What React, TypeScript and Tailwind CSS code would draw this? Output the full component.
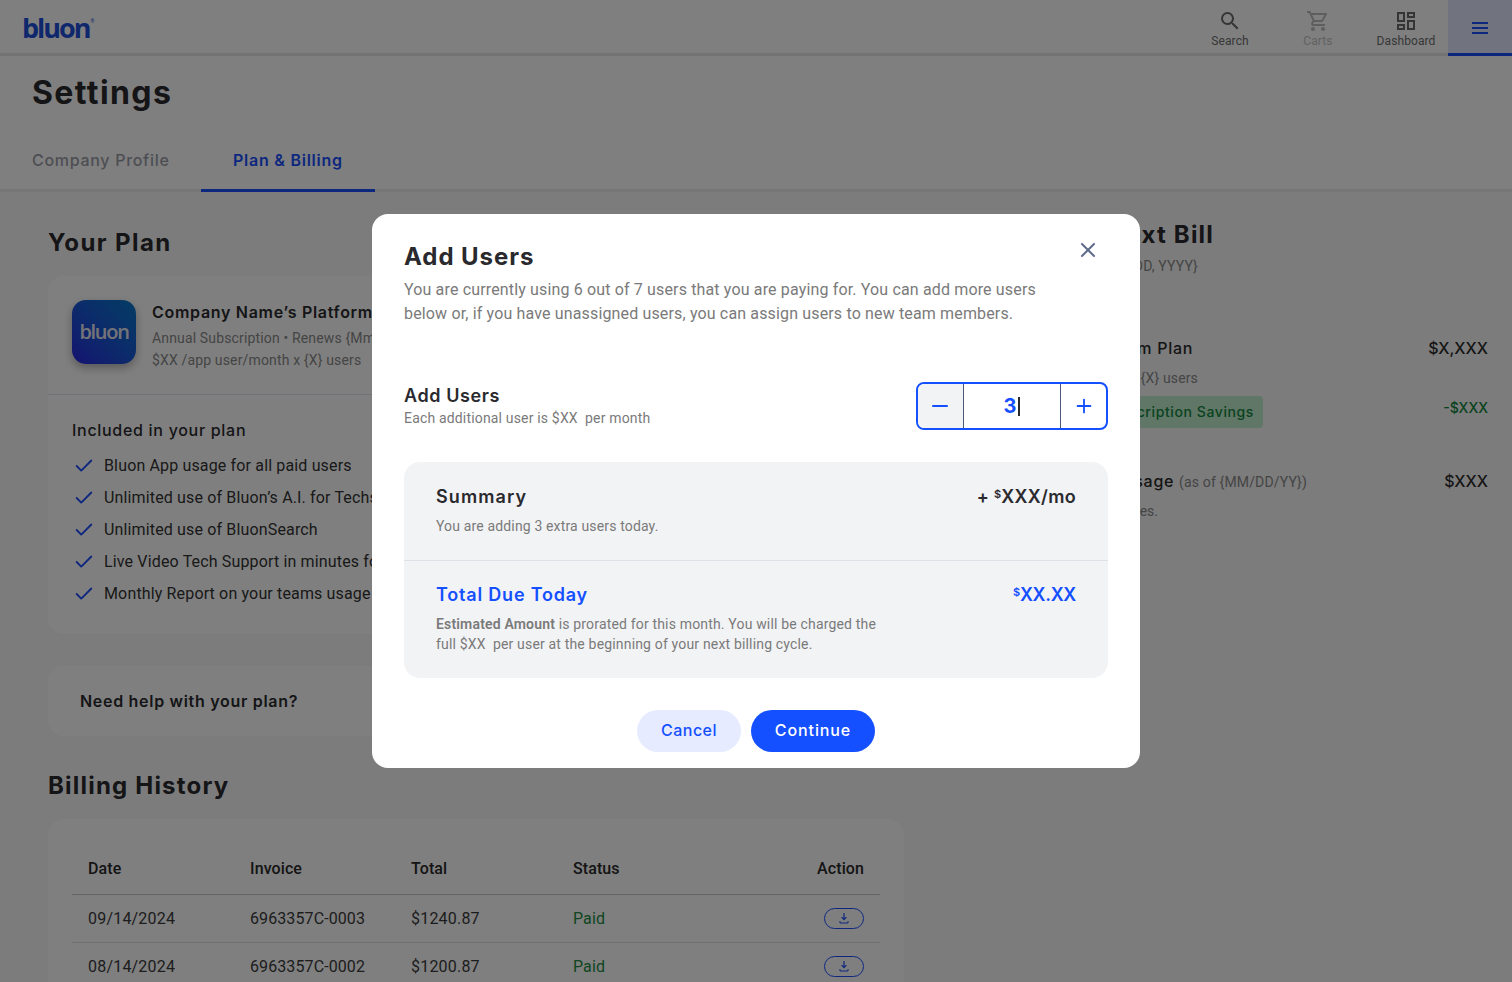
import React from 'react';
import { Check, Minus, Plus, X } from 'lucide-react';
import { MdOutlineDashboard, MdOutlineShoppingCart, MdSearch } from 'react-icons/md';

const heading = "font-['Inter','Liberation_Sans',sans-serif]";

const planItems = [
    'Bluon App usage for all paid users',
    'Unlimited use of Bluon’s A.I. for Techs and Managers',
    'Unlimited use of BluonSearch',
    'Live Video Tech Support in minutes for all users',
    'Monthly Report on your teams usage',
];

const invoices = [
    { date: '09/14/2024', invoice: '6963357C-0003', total: '$1240.87' },
    { date: '08/14/2024', invoice: '6963357C-0002', total: '$1200.87' },
];

const NavItem: React.FC<{ label: string; muted?: boolean; children: React.ReactNode }> = ({ label, muted, children }) => (
    <div className={`w-[88px] flex flex-col items-center pt-[9px] ${muted ? 'text-[#bdbdbd]' : 'text-[#6b6b6b]'}`}>
        {children}
        <span className={`text-[12px] leading-[14px] mt-[1px] tracking-[0.1px] ${muted ? 'text-[#c4c4c4]' : 'text-[#6f6f6f]'}`}>{label}</span>
    </div>
);

const DownloadButton = () => (
    <span className="w-[40px] h-[21px] rounded-full border border-[#1a4fff] flex items-center justify-center">
        <svg width="12" height="13" viewBox="0 0 12 13" fill="none" stroke="#1a4fff" strokeWidth="1.2">
            <path d="M6 1v6.5M3.6 5.2L6 7.6 8.4 5.2" />
            <path d="M2 9v2h8V9" strokeWidth="1" />
        </svg>
    </span>
);

const App: React.FC = () => {
    return (
        <div className="relative h-[982px] overflow-hidden bg-[#f8f8f8] font-['Roboto','Liberation_Sans',sans-serif] text-[#2a2a2a]">
            {/* top bar */}
            <header className="h-[56px] bg-white border-b-[3px] border-[#e6e6e6] flex items-stretch justify-between">
                <div className="pl-[22px] pt-[9px] flex items-start">
                    <span className="font-['Open_Sans','Liberation_Sans',sans-serif] font-bold text-[27px] leading-[38px] tracking-[-2px] text-[#1f4fd8]">bluon</span>
                    <span className="ml-[1px] mt-[9px] text-[5px] leading-[6px] text-[#1f4fd8]">®</span>
                </div>
                <div className="flex items-stretch">
                    <NavItem label="Search"><MdSearch size={24} /></NavItem>
                    <NavItem label="Carts" muted><MdOutlineShoppingCart size={24} /></NavItem>
                    <NavItem label="Dashboard"><MdOutlineDashboard size={24} /></NavItem>
                    <div className="relative -ml-[2px] w-[64px] h-[56px] pt-[2px] bg-[#e2e8ff] border-b-[3px] border-[#1a4fff] flex items-center justify-center">
                        <svg width="16" height="12" viewBox="0 0 16 12" stroke="#1a4fff" strokeWidth="2"><path d="M0 1h16M0 6h16M0 11h16" /></svg>
                    </div>
                </div>
            </header>

            {/* title and tabs */}
            <div className="bg-white border-b-[3px] border-[#ececec] h-[136px]">
                <h1 className={`${heading} pl-[32px] pt-[15px] text-[32px] leading-[44px] font-bold tracking-[1.4px] text-[#2a2a2e]`}>Settings</h1>
                <div className="flex mt-[31px] h-[46px]">
                    <div className={`${heading} pl-[32px] w-[201px] text-[16px] leading-[28px] font-medium text-[#9a9ca8] tracking-[0.7px]`}>Company Profile</div>
                    <div className={`${heading} w-[174px] h-[46px] border-b-[3px] border-[#1a4fff] pl-[32px] text-[16px] leading-[28px] font-semibold text-[#1a4fff] tracking-[0.75px]`}>Plan &amp; Billing</div>
                </div>
            </div>

            {/* page body */}
            <div className="flex">
                <main className="w-[856px] ml-[48px]">
                    <h2 className={`${heading} mt-[35px] text-[24px] leading-[32px] font-bold tracking-[1.4px] text-[#2a2a2e]`}>Your Plan</h2>
                    <section className="mt-[17px] h-[358px] rounded-[16px] bg-white">
                        <div className="h-[119px] border-b border-[#e2e4f0] px-[24px] pt-[24px] flex">
                            <div className="w-[64px] h-[64px] rounded-[14px] bg-gradient-to-tr from-[#2a1fe0] to-[#0a78c8] shadow-[0_4px_10px_rgba(0,0,0,0.3)] flex items-center justify-center">
                                <span className="font-['Open_Sans','Liberation_Sans',sans-serif] font-semibold text-[20px] tracking-[-1.3px] text-[#e8e8f0]">bluon</span>
                            </div>
                            <div className="ml-[16px]">
                                <div className={`${heading} text-[16px] leading-[24px] font-semibold tracking-[0.7px] text-[#2a2a2e]`}>Company Name’s Platform Plan</div>
                                <div className="mt-[3px] text-[14px] leading-[22px] tracking-[0.15px] text-[#8a8a8a]">Annual Subscription • Renews {'{Mmm DD, YYYY}'}</div>
                                <div className="text-[14px] leading-[22px] tracking-[0.15px] text-[#8a8a8a]">$XX /app user/month x {'{X}'} users</div>
                            </div>
                        </div>
                        <div className="px-[24px] pt-[23px]">
                            <div className={`${heading} text-[16px] leading-[24px] font-medium tracking-[0.7px] text-[#2a2a2e]`}>Included in your plan</div>
                            <ul className="mt-[8px]">
                                {planItems.map(item => (
                                    <li key={item} className="h-[32px] flex items-center text-[16px] tracking-[0.15px] text-[#333]">
                                        <Check size={22} strokeWidth={2} className="ml-[1px] text-[#1a4fff]" />
                                        <span className="ml-[9px]">{item}</span>
                                    </li>
                                ))}
                            </ul>
                        </div>
                    </section>
                    <section className="mt-[32px] h-[70px] rounded-[16px] bg-white px-[32px] flex items-center">
                        <span className={`${heading} text-[16px] font-semibold tracking-[0.7px] text-[#2a2a2e]`}>Need help with your plan?</span>
                    </section>
                    <h2 className={`${heading} mt-[34px] text-[24px] leading-[32px] font-bold tracking-[1.2px] text-[#2a2a2e]`}>Billing History</h2>
                    <section className="mt-[17px] rounded-[16px] bg-white px-[24px] pt-[25px] pb-[24px]">
                        <table className="w-full text-[16px] tracking-[0.1px] text-left">
                            <thead>
                                <tr className="h-[50px] border-b border-[#c9c9d2]">
                                    <th className="w-[162px] pl-[16px] font-medium">Date</th>
                                    <th className="w-[161px] pl-[16px] font-medium">Invoice</th>
                                    <th className="w-[162px] pl-[16px] font-medium">Total</th>
                                    <th className="pl-[16px] font-medium">Status</th>
                                    <th className="pr-[16px] font-medium text-right">Action</th>
                                </tr>
                            </thead>
                            <tbody>
                                {invoices.map(row => (
                                    <tr key={row.invoice} className="h-[48px] border-b border-[#e0e0e0] text-[#3a3a3a]">
                                        <td className="pl-[16px] pt-[2px] tracking-[0.2px]">{row.date}</td>
                                        <td className="pl-[16px] pt-[2px]">{row.invoice}</td>
                                        <td className="pl-[16px] pt-[2px] tracking-[0.2px]">{row.total}</td>
                                        <td className="pl-[16px] pt-[2px] text-[#1c8c42]">Paid</td>
                                        <td className="pr-[16px]"><div className="flex justify-end"><DownloadButton /></div></td>
                                    </tr>
                                ))}
                            </tbody>
                        </table>
                    </section>
                </main>

                {/* left labels are right-aligned to where they stop past the dialog's edge */}
                <aside className="w-[536px] ml-[48px] whitespace-nowrap">
                    <h2 className={`${heading} mt-[27px] w-[262px] text-right text-[24px] leading-[32px] font-bold tracking-[1.2px] text-[#2a2a2e]`}>Your Next Bill</h2>
                    <div className="mt-[5px] w-[246px] text-right text-[14px] leading-[20px] tracking-[0.15px] text-[#8a8a8a]">Due on {'{Mmm DD, YYYY}'}</div>
                    <div className="mt-[60px] flex justify-between">
                        <span className={`${heading} w-[241px] text-right text-[16px] leading-[24px] font-medium tracking-[0.7px]`}>Platform Plan</span>
                        <span className={`${heading} text-[16px] leading-[24px] font-medium`}>$X,XXX</span>
                    </div>
                    <div className="mt-[8px] w-[246px] text-right text-[14px] leading-[20px] tracking-[0.15px] text-[#8a8a8a]">$XX /app user x {'{X}'} users</div>
                    <div className="mt-[8px] flex justify-between">
                        <span className={`${heading} w-[311px] text-right h-[32px] pr-[9px] rounded-[4px] bg-[#c0eccc] text-[14px] leading-[32px] font-medium tracking-[0.6px] text-[#12873f]`}>Annual Subscription Savings</span>
                        <span className={`${heading} text-[14px] leading-[24px] font-medium text-[#12873f]`}>-$XXX</span>
                    </div>
                    <div className="mt-[41px] flex justify-between">
                        <span className={`${heading} w-[355px] text-right text-[16px] leading-[24px] font-medium tracking-[0.7px]`}>Usage <span className="font-['Roboto'] font-normal text-[14px] tracking-[0.15px] text-[#8a8a8a]">(as of {'{MM/DD/YY}'})</span></span>
                        <span className={`${heading} text-[16px] leading-[24px] font-medium`}>$XXX</span>
                    </div>
                    <div className="mt-[7px] w-[206px] text-right text-[14px] leading-[20px] text-[#8a8a8a]">Overages for licenses.</div>
                </aside>
            </div>

            {/* dim layer and dialog */}
            <div className="absolute inset-0 bg-black/50" />
            <div className="absolute left-[372px] top-[214px] w-[768px] h-[554px] rounded-[16px] bg-white px-[32px] pt-[26px]">
                <button className="absolute right-[40px] top-[24px] text-[#5f6b8a]"><X size={24} strokeWidth={2} /></button>
                <h2 className={`${heading} text-[24px] leading-[34px] font-bold tracking-[0.95px] text-[#2a2a2e]`}>Add Users</h2>
                <p className="mt-[4px] w-[660px] text-[16px] leading-[24px] tracking-[0.15px] text-[#7a7a7a]">
                    You are currently using 6 out of 7 users that you are paying for. You can add more users below or, if you have unassigned users, you can assign users to new team members.
                </p>

                <div className="mt-[56px] flex items-center justify-between">
                    <div>
                        <div className={`${heading} text-[18px] leading-[24px] font-semibold tracking-[0.6px] text-[#2a2a2e]`}>Add Users</div>
                        <div className="text-[14px] leading-[20px] tracking-[0.17px] text-[#7a7a7a]">Each additional user is $XX&nbsp; per month</div>
                    </div>
                    <div className="w-[192px] h-[48px] rounded-[8px] border-2 border-[#1450ff] flex overflow-hidden">
                        <div className="w-[46px] pr-[1px] bg-[#f2f3f5] border-r border-[#4a5a78] flex items-center justify-center text-[#1450ff]"><Minus size={24} strokeWidth={2} /></div>
                        <div className="w-[97px] border-r border-[#4a5a78] flex items-center justify-center">
                            <span className={`${heading} text-[20px] font-bold text-[#1450ff]`}>3</span>
                            <span className="w-[2px] h-[19px] ml-[2px] bg-[#2a2a2e]" />
                        </div>
                        <div className="flex-1 flex items-center justify-center text-[#1450ff]"><Plus size={22} strokeWidth={2} /></div>
                    </div>
                </div>

                <div className="mt-[32px] h-[216px] rounded-[16px] bg-[#f2f3f5]">
                    <div className="h-[99px] border-b border-[#dfe1e8] px-[32px] pt-[22px]">
                        <div className={`${heading} flex justify-between text-[18px] leading-[26px] font-semibold text-[#2a2a2e]`}>
                            <span className="tracking-[1.1px]">Summary</span>
                            <span className="tracking-[0.3px]">+ <sup className="text-[11px]">$</sup>XXX/mo</span>
                        </div>
                        <div className="mt-[6px] text-[14px] leading-[20px] tracking-[0.15px] text-[#7a7a7a]">You are adding 3 extra users today.</div>
                    </div>
                    <div className="px-[32px] pt-[21px]">
                        <div className={`${heading} flex justify-between text-[18px] leading-[26px] font-semibold text-[#1450ff]`}>
                            <span className="tracking-[0.8px]">Total Due Today</span>
                            <span className="tracking-[-0.3px]"><sup className="text-[11px]">$</sup>XX.XX</span>
                        </div>
                        <p className="mt-[6px] w-[450px] text-[14px] leading-[20px] tracking-[0.17px] text-[#7a7a7a]">
                            <span className="font-semibold">Estimated Amount</span> is prorated for this month. You will be charged the full $XX&nbsp; per user at the beginning of your next billing cycle.
                        </p>
                    </div>
                </div>

                <div className="mt-[32px] flex justify-center gap-[10px]">
                    <button className={`${heading} w-[104px] h-[42px] pb-[2px] rounded-full bg-[#e6ebff] text-[16px] font-medium tracking-[0.5px] text-[#1450ff]`}>Cancel</button>
                    <button className={`${heading} w-[124px] h-[42px] pb-[2px] rounded-full bg-[#1450ff] text-[16px] font-medium tracking-[0.9px] text-white`}>Continue</button>
                </div>
            </div>
        </div>
    );
};

export default App;
